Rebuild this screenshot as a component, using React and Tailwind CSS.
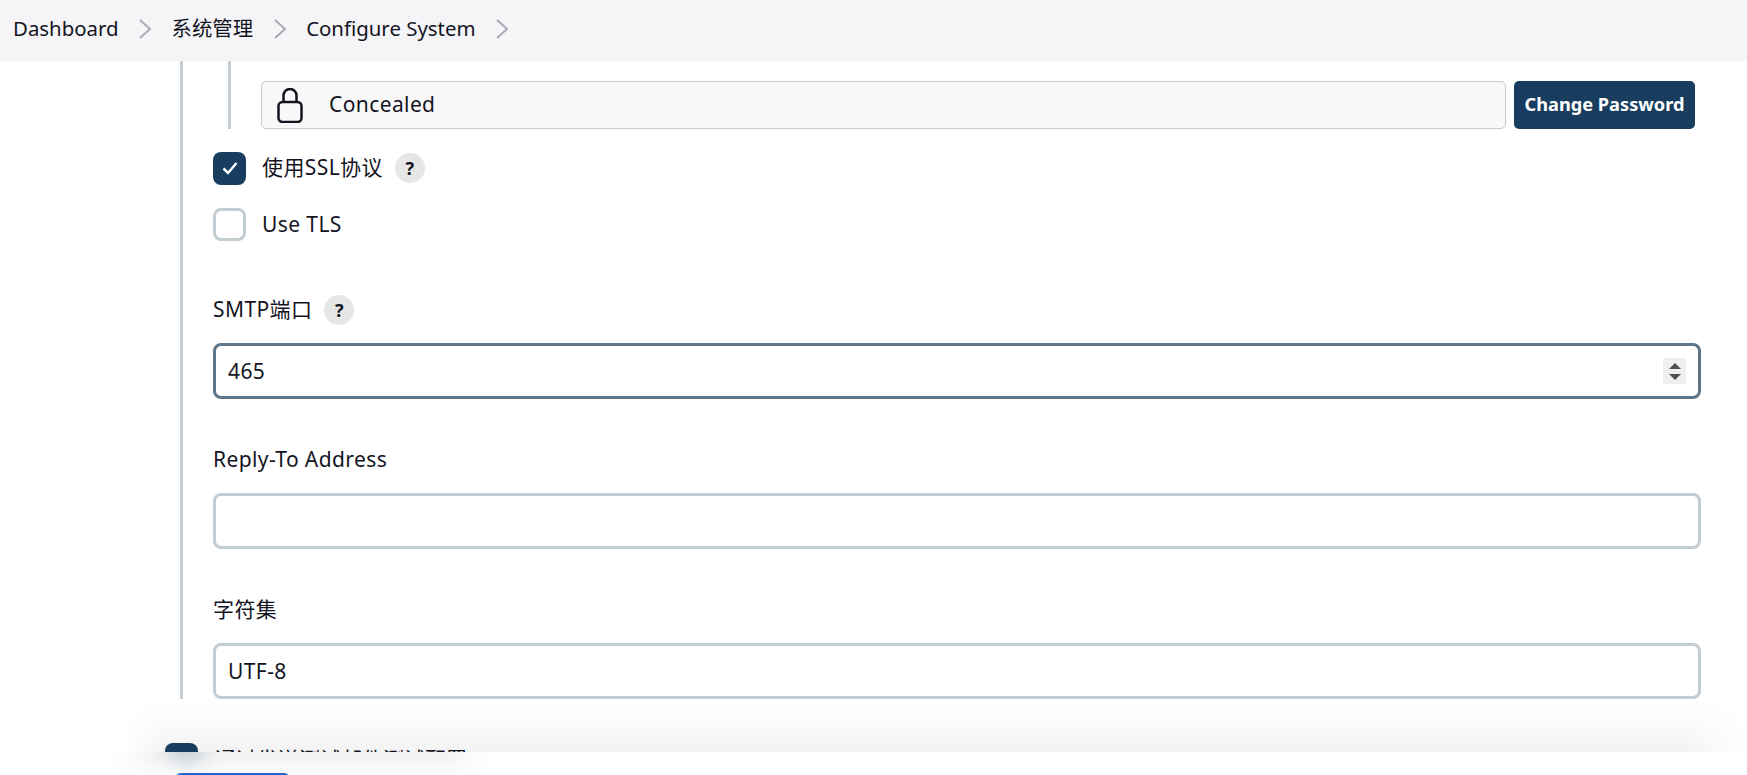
const font = { fontFamily: '"Noto Sans", "Noto Sans CJK SC", sans-serif' };

const Chevron = () => (
  <svg width="14" height="22" viewBox="0 0 14 22" fill="none" stroke="#a9a9b8" strokeWidth="2" className="shrink-0">
    <path d="M2 2l10 9-10 9" />
  </svg>
);

const Help = () => (
  <span className="flex h-[30px] w-[30px] items-center justify-center rounded-full bg-[#e6e6e6] text-[18px] font-bold tracking-normal text-[#14141f]">?</span>
);

const Check = ({ checked }) => (
  <span
    className={`flex h-[33px] w-[33px] shrink-0 items-center justify-center rounded-[8px] ${
      checked ? "bg-[#183d5f]" : "border-[3px] border-[#c3ccd1] bg-white"
    }`}
  >
    {checked && (
      <svg width="20" height="20" viewBox="0 0 20 20" fill="none" stroke="#fff" strokeWidth="2.5">
        <path d="M3.5 10.5l4.5 4.5 8.5-10" />
      </svg>
    )}
  </span>
);

const Field = ({ label, help, value, focused, spinner, className }) => (
  <div className={className}>
    <div className="flex h-[30px] items-center gap-3">
      <span>{label}</span>
      {help && <Help />}
    </div>
    <div
      className={`mt-[18px] flex h-[56px] items-center rounded-[8px] border-[3px] bg-white pl-[12px] pr-[12px] ${
        focused ? "border-[#5e7587]" : "border-[#c3ccd1]"
      }`}
    >
      <span className="flex-1 pt-[2px]">{value}</span>
      {spinner && (
        <span className="flex h-[26px] w-[23px] flex-col items-center justify-center gap-[5px] bg-[#f0f0f0]">
          <span className="h-0 w-0 border-x-[6px] border-b-[6px] border-x-transparent border-b-[#505050]" />
          <span className="h-0 w-0 border-x-[6px] border-t-[6px] border-x-transparent border-t-[#505050]" />
        </span>
      )}
    </div>
  </div>
);

export default function App() {
  return (
    <div className="flex h-[775px] w-full flex-col overflow-hidden bg-white text-[21px] tracking-[0.4px] text-[#14141f]" style={font}>
      <header className="flex h-[61px] shrink-0 items-center bg-[#f5f5f8] pb-[4px] pl-[13px] text-[20.4px] tracking-normal">
        <span>Dashboard</span>
        <span className="ml-[19px] mr-[20px] flex"><Chevron /></span>
        <span>系统管理</span>
        <span className="ml-[20px] mr-[19px] flex"><Chevron /></span>
        <span>Configure System</span>
        <span className="ml-[20px] flex"><Chevron /></span>
      </header>

      <main className="h-[638px] shrink-0 pl-[180px]">
        <div className="h-full w-[1521px] border-l-[3px] border-[#c3ccd1] pl-[30px]">
          <div className="ml-[15px] flex h-[68px] items-end border-l-[3px] border-[#c3ccd1] pl-[30px]">
            <div className="flex h-[48px] w-[1245px] items-center rounded-[5px] border-[1.5px] border-[#c3ccd1] bg-[#f8f8f8] pl-[15px]">
              <svg width="26" height="35" viewBox="0 0 26 35" fill="none" stroke="#14141f" strokeWidth="2.5">
                <rect x="1.5" y="14" width="23" height="20" rx="4" />
                <path d="M6.5 14V7.5a6.5 6.5 0 0 1 13 0V14" />
              </svg>
              <span className="ml-[26px]">Concealed</span>
            </div>
            <button className="ml-2 h-[48px] w-[181px] rounded-[5px] bg-[#183d5f] pb-[1px] text-[18.2px] font-bold tracking-normal text-white">
              Change Password
            </button>
          </div>

          <div className="mt-[22px] flex h-[34px] items-center">
            <Check checked />
            <span className="ml-4">使用SSL协议</span>
            <span className="ml-3"><Help /></span>
          </div>
          <div className="mt-[22px] flex h-[34px] items-center">
            <Check />
            <span className="ml-4 pt-[1px]">Use TLS</span>
          </div>

          <Field className="mt-[54px]" label="SMTP端口" help value="465" focused spinner />
          <Field className="mt-[46px]" label="Reply-To Address" value="" />
          <Field className="mt-[46px]" label="字符集" value="UTF-8" />
        </div>
      </main>

      <footer className="relative flex-1 overflow-hidden">
        <div className="relative h-[53px] overflow-hidden bg-linear-to-b from-white via-[#fafafa] to-[#f3f3f3] pl-[165px]">
          <div className="mt-[44px] flex items-center">
            <span className="h-[33px] w-[33px] shrink-0 rounded-[8px] bg-[#183d5f]" />
            <span className="ml-[17px] tracking-normal">通过发送测试邮件测试配置</span>
          </div>
          <div className="absolute inset-y-0 left-0 w-[165px] bg-linear-to-r from-white from-75% to-transparent" />
          <div className="absolute inset-y-0 right-0 w-[60px] bg-linear-to-l from-white to-transparent" />
        </div>
        <div className="relative h-[23px] overflow-hidden bg-white">
          <div className="absolute left-[130px] top-[-14px] h-[22px] w-[340px] rounded-full bg-[#e9e9e9] blur-[14px]" />
          <div className="absolute left-[168px] top-[-14px] h-[22px] w-[36px] rounded-full bg-[#b9c4ce] blur-[10px]" />
          <div className="absolute left-[175px] top-[21px] h-[8px] w-[115px] rounded-t-[6px] bg-[#2563c8]" />
        </div>
      </footer>
    </div>
  );
}
